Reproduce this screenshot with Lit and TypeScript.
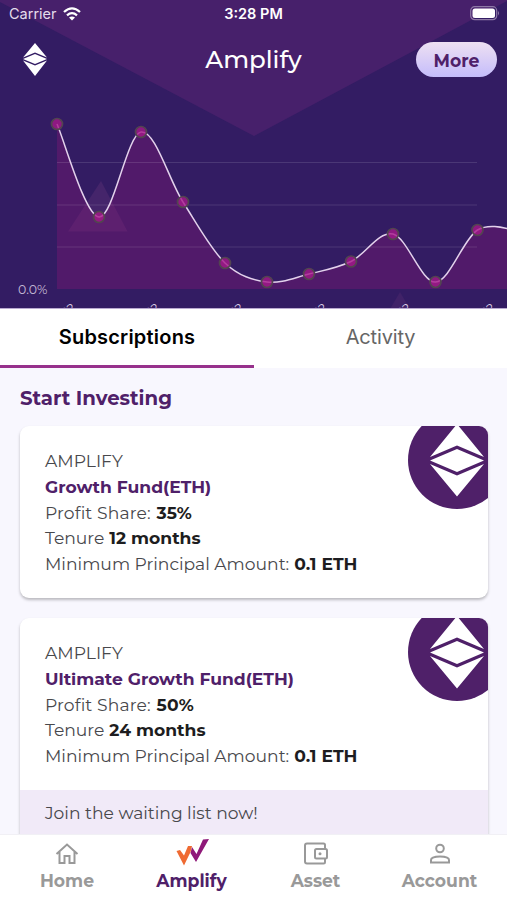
import { LitElement, html, svg, css } from "lit";
import { customElement } from "lit/decorators.js";

const POINTS = [[57,124],[99,217],[141,132],[183,202],[225,263],[267,282],[309,274],[351,261.5],[393,234],[435.5,282],[477.5,230],[519.5,231]];

// Smooth curve through every point (Catmull-Rom converted to cubic segments).
function curve(p: number[][]): string {
  let d = `M${p[0][0]},${p[0][1]}`;
  for (let i = 0; i < p.length - 1; i++) {
    const a = p[Math.max(0, i - 1)], b = p[i], c = p[i + 1], e = p[Math.min(p.length - 1, i + 2)];
    d += `C${b[0] + (c[0] - a[0]) / 6},${b[1] + (c[1] - a[1]) / 6} ${c[0] - (e[0] - b[0]) / 6},${c[1] - (e[1] - b[1]) / 6} ${c[0]},${c[1]}`;
  }
  return d;
}

@customElement("fund-card")
class FundCard extends LitElement {
  static properties = { name: {}, share: {}, tenure: {}, waiting: { type: Boolean } };
  declare name: string; declare share: string; declare tenure: string; declare waiting: boolean;
  static styles = css`
    :host { display: block; font-family: Montserrat, Inter, sans-serif; font-size: 17.150px; color: #48484c; }
    .card { background: #fff; border-radius: 9px; box-shadow: 0 2px 3px rgba(0,0,0,.25); overflow: hidden; position: relative; }
    .body { box-sizing: border-box; height: 172px; padding: 22.300px 25px 0; line-height: 25.7px; white-space: nowrap; }
    .coin { position: absolute; right: 0; top: 0; display: block; }
    .row { height: 25.7px; }
    .name { font-weight: 700; color: #4f2069; }
    b { color: #1d1d20; font-weight: 700; margin-left: .5px; }
    .share { letter-spacing: .15px; }
    .share b { margin-left: 1px; }
    .wait { height: 60px; box-sizing: border-box; background: #f1eaf8; padding: 10px 25px; line-height: 26px; }
  `;
  render() {
    return html`<div class="card"><div class="body">
      <div class="row">AMPLIFY</div>
      <div class="row name">${this.name}</div>
      <div class="row share">Profit Share: <b>${this.share}</b></div>
      <div class="row">Tenure <b>${this.tenure}</b></div>
      <div class="row">Minimum Principal Amount: <b>0.1 ETH</b></div>
      </div>
      <svg class="coin" width="80" height="84" viewBox="0 0 80 84"><circle cx="49" cy="34" r="49" fill="#4f2069"/>
      <path fill="#fff" d="M49-2L76 31L49 19.500L22 31ZM22 34.500L49 23L76 34.500L49 46ZM22 38L49 49.500L76 38L49 70.500Z"/></svg>
      ${this.waiting ? html`<div class="wait">Join the waiting list now!</div>` : ""}
    </div>`;
  }
}

@customElement("app-root")
class AppRoot extends LitElement {
  static styles = css`
    :host { display: flex; flex-direction: column; height: 900px; width: 507px; overflow: hidden; background: #f8f7fe; font-family: Montserrat, Inter, sans-serif; }
    .hero { height: 309px; flex: none; position: relative; background: #331c63; color: #fff; overflow: hidden; }
    .art { position: absolute; inset: 0; display: block; }
    .status { position: relative; display: grid; grid-template-columns: 1fr auto 1fr; height: 27px; align-items: center; padding: 0 7px 0 9px; font: 14.500px Inter, sans-serif; }
    .carrier { display: flex; gap: 6px; align-items: center; color: #e4dcec; }
    .time { font-weight: 600; margin-left: -2px; }
    .battery { justify-self: end; }
    .head { position: relative; display: grid; grid-template-columns: 1fr auto 1fr; height: 65px; align-items: center; padding: 0 10px 0 23px; }
    .title { font-size: 24.500px; font-weight: 500; margin: 0 0 2px -13px; }
    .more { justify-self: end; width: 81px; height: 35px; border-radius: 18px; background: linear-gradient(#eee0f2, #c4bcfb); color: #4f2069; font-size: 17.200px; font-weight: 700; line-height: 37px; text-align: center; }
    .tabs { height: 59px; flex: none; display: grid; grid-template-columns: 254px 1fr; background: #fff; font: 20px/57px Inter, sans-serif; text-align: center; }
    .on { font-weight: 600; color: #000; border-bottom: 3px solid #97318c; box-sizing: border-box; height: 59px; letter-spacing: .2px; }
    .off { color: #666; letter-spacing: -.15px; }
    .main { flex: 1; min-height: 0; overflow: hidden; padding: 16px 19.500px 0 20px; }
    h2 { margin: 0 0 14px; font-size: 19.700px; line-height: 29px; height: 28px; font-weight: 700; color: #4f2069; }
    .list { display: flex; flex-direction: column; gap: 20px; }
    .nav { height: 66px; flex: none; background: #fff; display: grid; grid-template-columns: 134px 115px 133px 115px; border-top: 1px solid #f1f0f5; box-sizing: border-box; }
    .item { display: flex; flex-direction: column; align-items: center; color: #999; font-weight: 700; font-size: 17.200px; line-height: 24px; padding-top: 4px; }
    .item svg { display: block; height: 30px; }
    .item.cur { color: #4f2069; }
  `;
  render() {
    const line = curve(POINTS);
    return html`
    <div class="hero">
      <svg class="art" width="507" height="309" viewBox="0 0 507 309">
        <path d="M0 0H507V1L254 136L0 2Z" fill="#47206b"/>
        <path d="M101 181L127.500 231.500H68Z" fill="#45256b"/>
        <path d="M400 292L410 309H390Z" fill="#402268"/>
        <path d="${line}V289H57Z" fill="#8f1879" opacity=".33"/>
        <path d="M57 162.500H477M57 205H477M57 247H477" stroke="#fff" stroke-opacity=".12"/>
        <path d="${line}" fill="none" stroke="#e3d2ec" stroke-width="1.500"/>
        ${POINTS.slice(0, -1).map(([x, y]) => svg`<circle cx="${x}" cy="${y}" r="5.500" fill="#a51989" fill-opacity=".8" stroke="#524550" stroke-width="1.700"/>`)}
        <text x="18" y="294" font-size="12.500" fill="#c6bad6">0.0%</text>
        ${[76, 160, 244, 327.5, 411.5, 495.5].map(x => svg`<text font-size="12" fill="#d9cce4" text-anchor="end" transform="translate(${x} 310) rotate(-32)">2022</text>`)}
        <path d="M0 308.500H507" stroke="#b9a9d0"/>
      </svg>
      <div class="status">
        <div class="carrier"><span>Carrier</span><svg width="18" height="14" viewBox="0 0 18 14" fill="none" stroke="#fff" stroke-width="2.300"><path d="M1 5Q9-2.200 17 5M4 8.300Q9 4 14 8.300"/><path d="M9 13.500L6 10.500Q9 8.300 12 10.500Z" fill="#fff" stroke="none"/></svg></div>
        <span class="time">3:28 PM</span>
        <svg class="battery" width="30" height="15" viewBox="0 0 30 15"><rect x=".7" y=".7" width="26" height="13" rx="4" fill="none" stroke="#8e79a6" stroke-width="1.200"/><rect x="2.500" y="2.500" width="22.500" height="9.500" rx="2.500" fill="#fff"/><path d="M28 5q2 2.200 0 4.500z" fill="#8e79a6"/></svg>
      </div>
      <div class="head">
        <svg width="24" height="33" viewBox="0 0 24 33" fill="#fff"><path d="M12 0L24 14.500L12 9.500L0 14.500ZM0 16L12 11L24 16L12 21ZM0 17.500L12 22.500L24 17.500L12 33Z"/></svg>
        <span class="title">Amplify</span><div class="more">More</div>
      </div>
    </div>
    <div class="tabs"><div class="on"><span>Subscriptions</span></div><div class="off"><span>Activity</span></div></div>
    <div class="main"><h2>Start Investing</h2><div class="list">
      <fund-card name="Growth Fund(ETH)" share="35%" tenure="12 months"></fund-card>
      <fund-card name="Ultimate Growth Fund(ETH)" share="50%" tenure="24 months" waiting></fund-card>
    </div></div>
    <div class="nav">
      <div class="item"><svg width="24" height="30" viewBox="0 0 24 30" fill="none" stroke="#999" stroke-width="2"><path d="M1.500 15L12 5.500L22.500 15M4.500 13V24H9.500V17H14.500V24H19.500V13"/></svg><span>Home</span></div>
      <div class="item cur"><svg width="34" height="30" viewBox="0 0 34 30"><path d="M1.500 12L5 11L9 16.500L13 7H17L15.500 13L9 26.500Z" fill="#ef6a32"/><path d="M17 8L21.500 15L28 .5L34 0L21 23L15.500 14Z" fill="#8f1979"/></svg><span>Amplify</span></div>
      <div class="item"><svg width="26" height="30" viewBox="0 0 26 30" fill="none" stroke="#999" stroke-width="2"><path d="M22 10V6Q22 4.500 20.500 4.500H4Q2 4.500 2 6.500V22.500Q2 24.500 4 24.500H20.500Q22 24.500 22 23V19"/><rect x="12" y="10" width="12" height="9.500" rx="1.500"/><circle cx="17" cy="14.700" r="1.500" fill="#999" stroke="none"/></svg><span>Asset</span></div>
      <div class="item"><svg width="24" height="30" viewBox="0 0 24 30" fill="none" stroke="#999" stroke-width="2"><circle cx="12" cy="9.500" r="3.800"/><path d="M3 23.500V21Q3 17.500 12 17.500Q21 17.500 21 21V23.500Z"/></svg><span>Account</span></div>
    </div>`;
  }
}
